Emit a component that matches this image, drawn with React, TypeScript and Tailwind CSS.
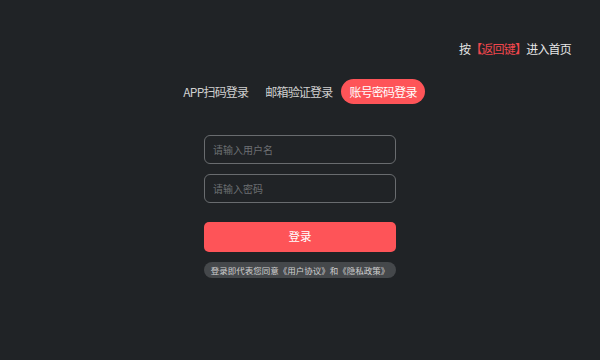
import React from "react";

export default function App() {
  const font = { fontFamily: '"Noto Sans CJK SC", "Noto Sans", sans-serif' };
  return (
    <div className="w-[600px] h-[360px] bg-[#202326] flex flex-col overflow-hidden" style={font}>
      <div className="flex justify-end pr-[29px] pt-[41px] h-[57px]">
        <span className="text-[12px] tracking-[-0.8px] leading-[16px] text-[#e6e6e6] whitespace-nowrap">
          按<span className="text-[#f0474d]">【返回键】</span>进入首页
        </span>
      </div>
      <div className="flex justify-center pt-[22px]">
        <div className="flex items-center gap-[1px]">
          <div className="h-[25px] px-[8px] flex items-center text-[12px] tracking-[-0.8px] text-[#d0d0d0] whitespace-nowrap">APP扫码登录</div>
          <div className="h-[25px] px-[8px] flex items-center text-[12px] tracking-[-0.8px] text-[#d0d0d0] whitespace-nowrap">邮箱验证登录</div>
          <div className="h-[25px] px-[8px] flex items-center rounded-full bg-[#fe5458] text-[12px] tracking-[-0.8px] text-white whitespace-nowrap">账号密码登录</div>
        </div>
      </div>
      <div className="flex flex-col items-center pt-[31px]">
        <div className="w-[192px] flex flex-col">
          <div className="h-[29px] rounded-[6px] border-[1.5px] border-[#696c6f] flex items-center pl-[8px] text-[10px] text-[#6d7073]">请输入用户名</div>
          <div className="h-[29px] mt-[10px] rounded-[6px] border-[1.5px] border-[#696c6f] flex items-center pl-[8px] text-[10px] text-[#6d7073]">请输入密码</div>
          <div className="h-[30px] mt-[19px] rounded-[5px] bg-[#fe5458] flex items-center justify-center text-[11.5px] text-white">登录</div>
          <div className="h-[16px] mt-[10px] rounded-full bg-[#45484b] flex items-center justify-center text-[8.5px] text-[#cfcfcf] whitespace-nowrap">登录即代表您同意《用户协议》和《隐私政策》</div>
        </div>
      </div>
    </div>
  );
}
